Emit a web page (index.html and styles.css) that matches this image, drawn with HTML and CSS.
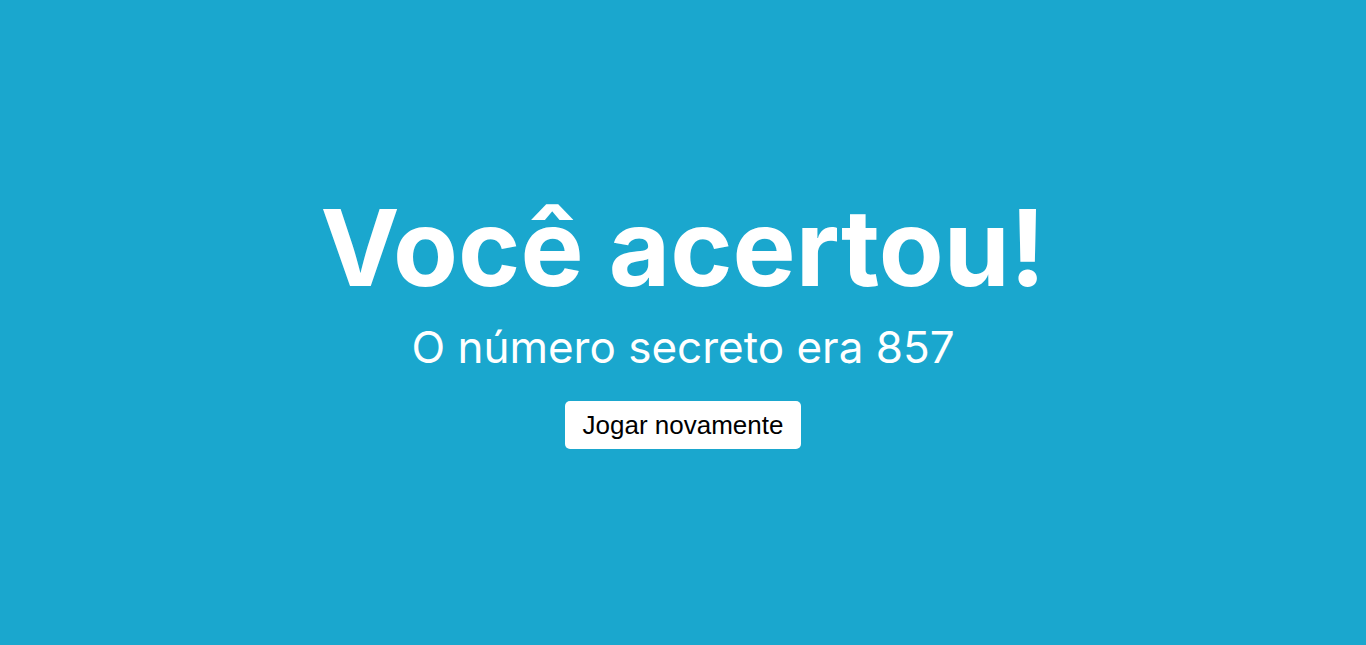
FILE: index.html
```html
<!DOCTYPE html>
<html lang="pt-BR">
<head>
<meta charset="utf-8">
<title>Você acertou!</title>
<link rel="stylesheet" href="styles.css">
</head>
<body>
<main class="screen">
  <h1 class="title">Você acertou!</h1>
  <p class="subtitle">O número secreto era 857</p>
  <button class="btn" type="button">Jogar novamente</button>
</main>
</body>
</html>
```
FILE: styles.css
```css
html, body {
  margin: 0;
  height: 100%;
}
body {
  background: #1aa7ce;
  font-family: Inter, "Noto Sans", sans-serif;
  color: #fff;
}
.screen {
  box-sizing: border-box;
  height: 100%;
  padding-bottom: 12px;
  display: flex;
  flex-direction: column;
  align-items: center;
  justify-content: center;
}
.title {
  margin: 0;
  font-size: 106px;
  font-weight: 700;
  line-height: 1.2;
}
.subtitle {
  margin: 10px 0 28px;
  font-size: 44px;
  font-weight: 400;
  line-height: 1.2;
}
.btn {
  font-family: "Liberation Sans", Arial, sans-serif;
  font-size: 26px;
  color: #000;
  background: #fff;
  border: none;
  border-radius: 5px;
  padding: 0 18px;
  height: 48px;
}
```
